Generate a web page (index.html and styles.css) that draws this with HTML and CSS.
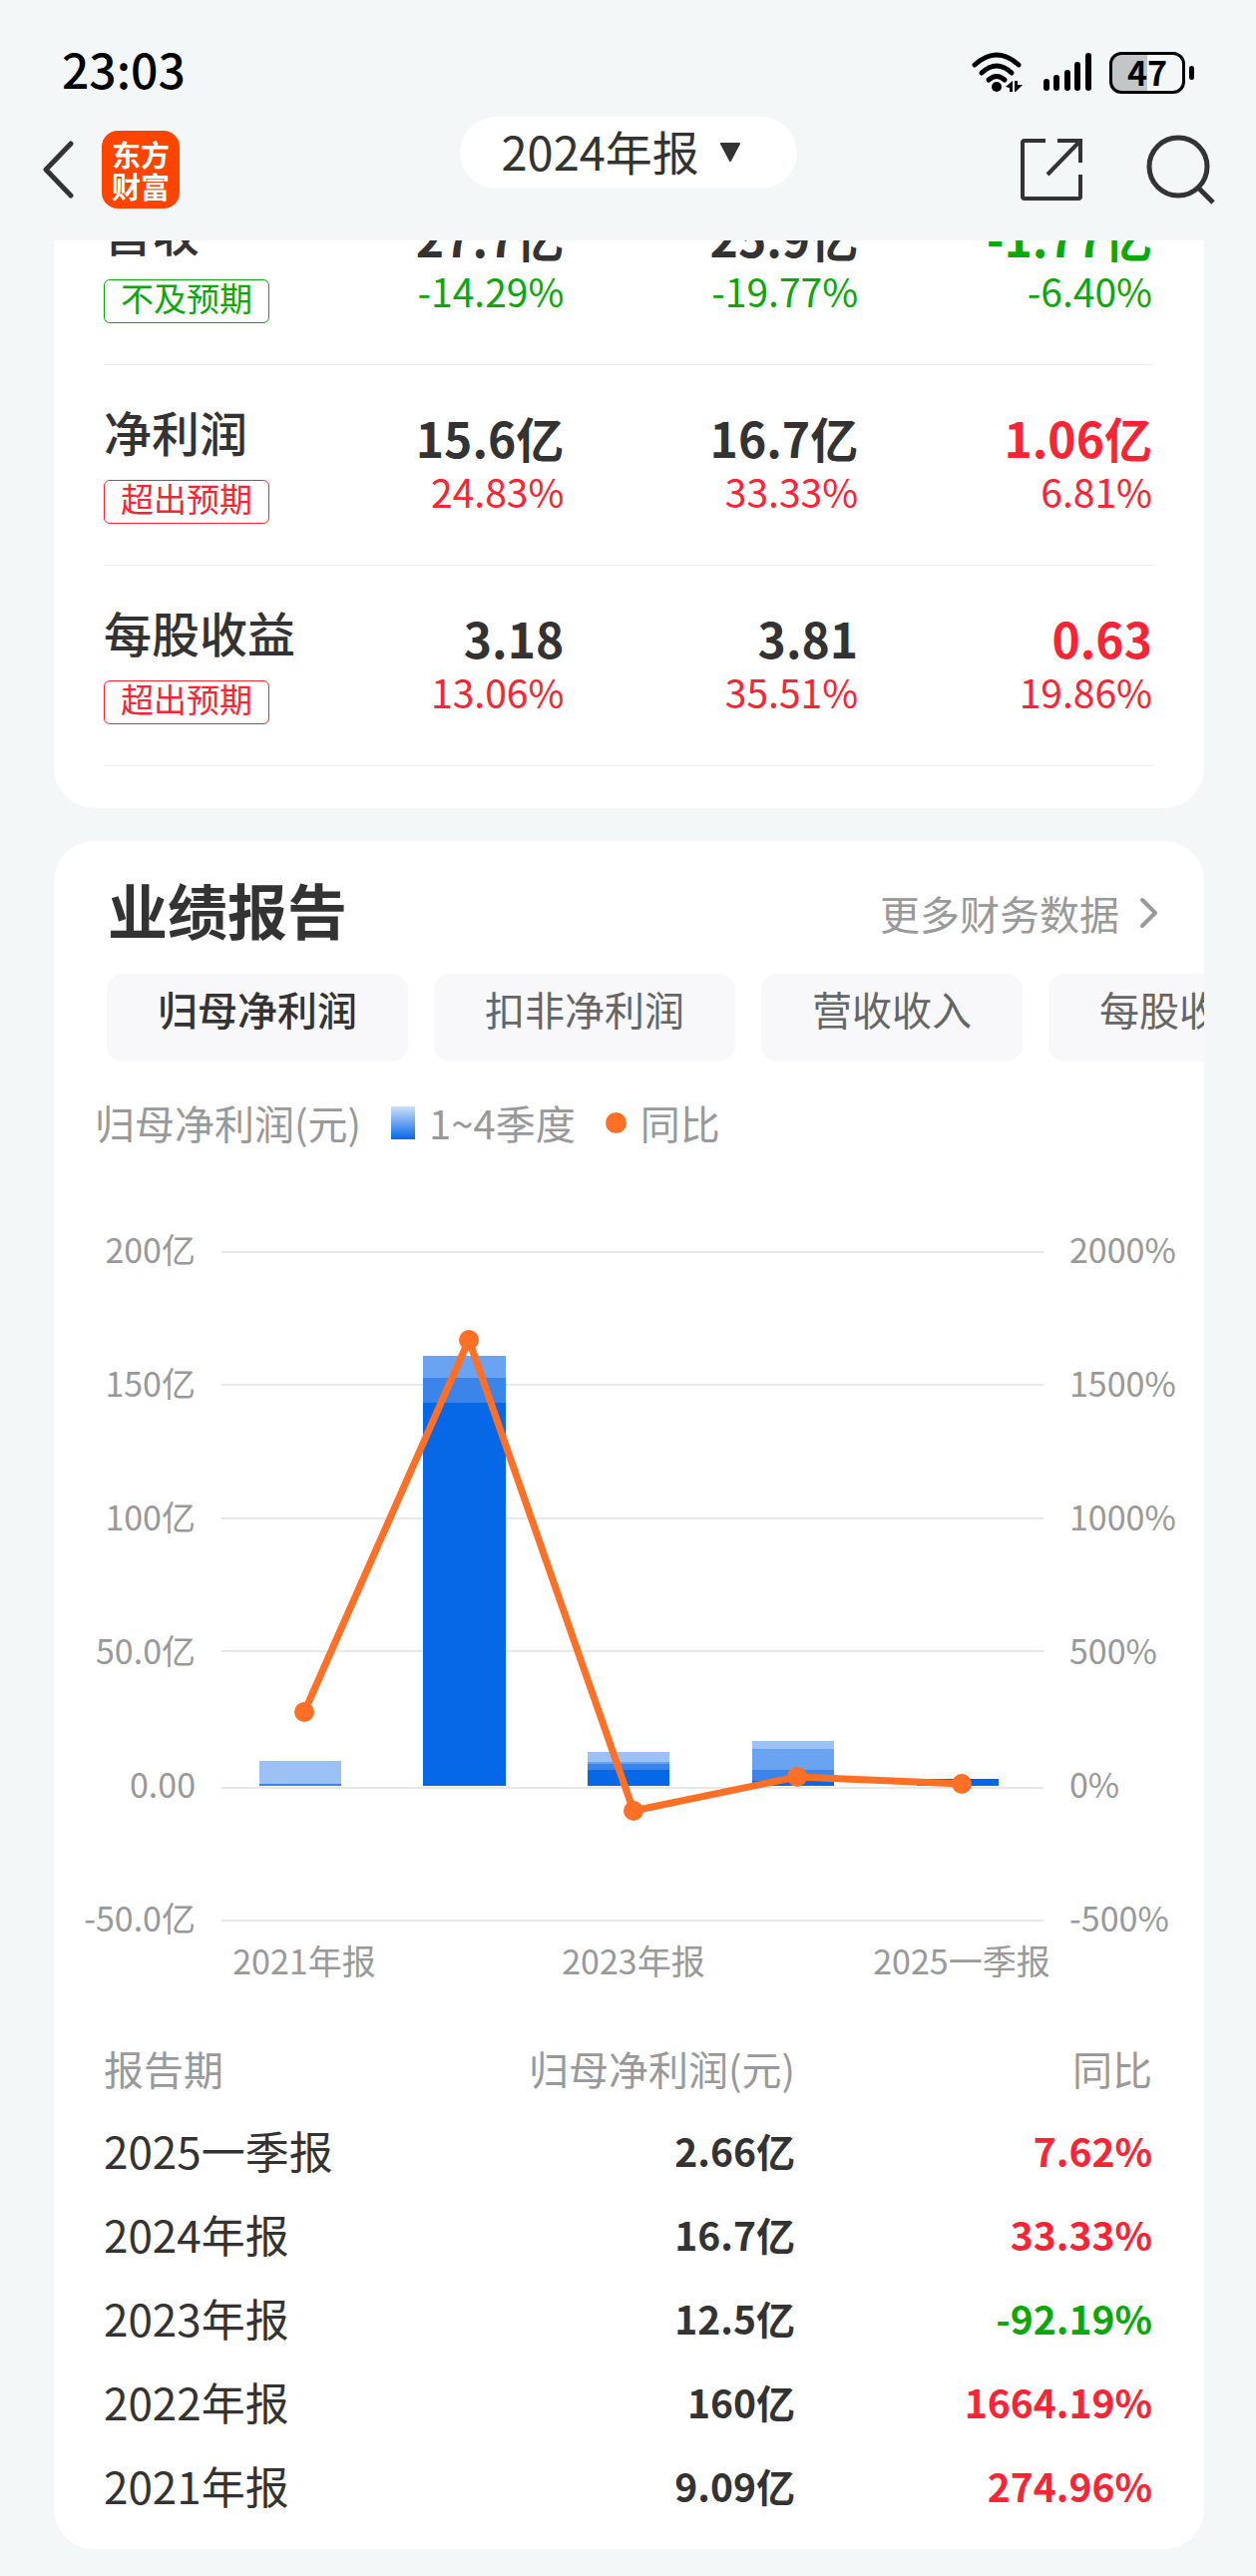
FILE: index.html
```html
<!DOCTYPE html>
<html lang="zh-CN">
<head>
    <meta charset="UTF-8">
    <meta name="viewport" content="width=device-width, initial-scale=1">
    <title>2024年报 - 东方财富</title>
    <link rel="stylesheet" href="styles.css">
</head>
<body>
    <header class="header">
        <div class="status">
            <span class="time">23:03</span>
            <div class="status-icons">
                <svg width="52" height="42" viewBox="0 0 52 42" aria-label="Wi-Fi">
                    <g fill="none" stroke="#000" stroke-width="5" stroke-linecap="round">
                        <path d="M3 13 Q25 -7 47 13"/>
                        <path d="M10 21 Q25 7 40 21"/>
                        <path d="M17 28 Q25 21 33 28"/>
                    </g>
                    <circle cx="25" cy="35" r="5"/>
                    <path d="M34 35 L41 29 V40 H38 V36 Z M43 29 V40 H44 L51 33 H46 V29 Z"/>
                </svg>
                <svg width="50" height="42" viewBox="0 0 50 42" aria-label="信号">
                    <g stroke="#000" stroke-width="6" stroke-linecap="round">
                        <path d="M5 30 V36"/>
                        <path d="M15 26 V36"/>
                        <path d="M26 21 V36"/>
                        <path d="M36 13 V36"/>
                        <path d="M47 4 V36"/>
                    </g>
                </svg>
                <div class="battery"><span>47</span></div>
            </div>
        </div>
        <nav class="nav">
            <div class="nav-left">
                <a href="#" class="back" aria-label="返回">
                    <svg width="34" height="60" viewBox="0 0 34 60"><path d="M31 4 L6 30 L31 56" fill="none" stroke="#333" stroke-width="5" stroke-linecap="round" stroke-linejoin="round"/></svg>
                </a>
                <a href="#" class="logo"><span>东方</span><span>财富</span></a>
            </div>
            <div class="period">
                <select aria-label="报告期">
                    <option>2024年报</option>
                    <option>2023年报</option>
                    <option>2022年报</option>
                </select>
                <svg class="arrow" width="22" height="20" viewBox="0 0 22 20"><path d="M2 1 H20 L11 18 Z" fill="#333" stroke="#333" stroke-width="2" stroke-linejoin="round"/></svg>
            </div>
            <div class="nav-right">
                <a href="#" aria-label="分享">
                    <svg width="64" height="64" viewBox="0 0 64 64" fill="none" stroke="#333" stroke-width="4">
                        <path d="M26 3 H5 Q3 3 3 5 V59 Q3 61 5 61 H59 Q61 61 61 59 V37" />
                        <path d="M38 3 H61 V25"/>
                        <path d="M61 3 L28 37"/>
                    </svg>
                </a>
                <a href="#" aria-label="搜索">
                    <svg width="70" height="70" viewBox="0 0 70 70" fill="none" stroke="#333" stroke-width="5">
                        <circle cx="32" cy="32" r="29"/>
                        <path d="M52 53 L67 68"/>
                    </svg>
                </a>
            </div>
        </nav>
    </header>

    <main>
        <section class="card forecast">
            <table>
                <tr>
                    <th scope="row">营收<span class="tag down">不及预期</span></th>
                    <td><b>27.7亿</b><span class="down">-14.29%</span></td>
                    <td><b>25.9亿</b><span class="down">-19.77%</span></td>
                    <td><b class="down">-1.77亿</b><span class="down">-6.40%</span></td>
                </tr>
                <tr>
                    <th scope="row">净利润<span class="tag up">超出预期</span></th>
                    <td><b>15.6亿</b><span class="up">24.83%</span></td>
                    <td><b>16.7亿</b><span class="up">33.33%</span></td>
                    <td><b class="up">1.06亿</b><span class="up">6.81%</span></td>
                </tr>
                <tr>
                    <th scope="row">每股收益<span class="tag up">超出预期</span></th>
                    <td><b>3.18</b><span class="up">13.06%</span></td>
                    <td><b>3.81</b><span class="up">35.51%</span></td>
                    <td><b class="up">0.63</b><span class="up">19.86%</span></td>
                </tr>
            </table>
        </section>

        <section class="card report">
            <div class="report-head">
                <h2>业绩报告</h2>
                <a href="#" class="more">更多财务数据
                    <svg width="20" height="32" viewBox="0 0 20 32"><path d="M3 3 L16 16 L3 29" fill="none" stroke="#999" stroke-width="4" stroke-linecap="round" stroke-linejoin="round"/></svg>
                </a>
            </div>

            <div class="tabs">
                <button type="button" class="active">归母净利润</button>
                <button type="button">扣非净利润</button>
                <button type="button">营收收入</button>
                <button type="button">每股收益</button>
            </div>

            <div class="legend">
                <span>归母净利润(元)</span>
                <span class="legend-item"><i class="bar-mark"></i>1~4季度</span>
                <span class="legend-item"><i class="dot-mark"></i>同比</span>
            </div>

            <svg class="chart" viewBox="0 0 1153 877" role="img" aria-label="归母净利润与同比">
                <g class="grid">
                    <path d="M168 100 H992"/>
                    <path d="M168 233 H992"/>
                    <path d="M168 367 H992"/>
                    <path d="M168 500 H992"/>
                    <path d="M168 637 H992"/>
                    <path d="M168 770 H992"/>
                </g>
                <g class="axis axis-left">
                    <text x="142" y="111">200亿</text>
                    <text x="142" y="245">150亿</text>
                    <text x="142" y="379">100亿</text>
                    <text x="142" y="513">50.0亿</text>
                    <text x="142" y="647">0.00</text>
                    <text x="142" y="781">-50.0亿</text>
                </g>
                <g class="axis">
                    <text x="1018" y="111">2000%</text>
                    <text x="1018" y="245">1500%</text>
                    <text x="1018" y="379">1000%</text>
                    <text x="1018" y="513">500%</text>
                    <text x="1018" y="647">0%</text>
                    <text x="1018" y="781">-500%</text>
                </g>
                <g class="axis axis-bottom">
                    <text x="251" y="824">2021年报</text>
                    <text x="581" y="824">2023年报</text>
                    <text x="910" y="824">2025一季报</text>
                </g>
                <!-- 2021 -->
                <rect class="q4" x="206" y="610" width="82" height="25"/>
                <rect class="q2" x="206" y="633" width="82" height="2"/>
                <!-- 2022 -->
                <rect class="q3" x="370" y="204" width="83" height="22"/>
                <rect class="q2" x="370" y="226" width="83" height="25"/>
                <rect class="q1" x="370" y="251" width="83" height="384"/>
                <!-- 2023 -->
                <rect class="q4" x="535" y="601" width="82" height="11"/>
                <rect class="q3" x="535" y="611" width="82" height="3"/>
                <rect class="q2" x="535" y="613" width="82" height="6"/>
                <rect class="q1" x="535" y="619" width="82" height="16"/>
                <!-- 2024 -->
                <rect class="q4" x="700" y="590" width="82" height="8"/>
                <rect class="q3" x="700" y="598" width="82" height="21"/>
                <rect class="q2" x="700" y="619" width="82" height="11"/>
                <rect class="q1" x="700" y="630" width="82" height="5"/>
                <!-- 2025 -->
                <rect class="q1" x="865" y="628" width="82" height="7"/>
                <polyline class="line" points="251,561 416,188 581,660 745,626 910,633"/>
                <g class="points">
                    <circle cx="251" cy="561" r="10"/>
                    <circle cx="416" cy="188" r="10"/>
                    <circle cx="581" cy="660" r="10"/>
                    <circle cx="745" cy="626" r="10"/>
                    <circle cx="910" cy="633" r="10"/>
                </g>
            </svg>

            <table class="history">
                <thead>
                    <tr><th>报告期</th><th>归母净利润(元)</th><th>同比</th></tr>
                </thead>
                <tbody>
                    <tr><td>2025一季报</td><td>2.66亿</td><td class="up">7.62%</td></tr>
                    <tr><td>2024年报</td><td>16.7亿</td><td class="up">33.33%</td></tr>
                    <tr><td>2023年报</td><td>12.5亿</td><td class="down">-92.19%</td></tr>
                    <tr><td>2022年报</td><td>160亿</td><td class="up">1664.19%</td></tr>
                    <tr><td>2021年报</td><td>9.09亿</td><td class="up">274.96%</td></tr>
                </tbody>
            </table>
        </section>
    </main>
</body>
</html>
```
FILE: styles.css
```css
* { box-sizing: border-box; }
body { margin: 0; background: #f3f7f8; color: #333; font-family: "Noto Sans CJK SC", sans-serif; font-size: 40px; }
a { color: inherit; text-decoration: none; }
svg { display: block; }
table { width: 100%; border-spacing: 0; table-layout: fixed; }
th, td { padding: 0; }
.up { color: #fc2434; }
.down { color: #0aa80a; }

/* header */
.header { position: sticky; top: 0; z-index: 1; background: #f3f7f8; }
.status { display: flex; justify-content: space-between; padding: 38px 71px 0 62px; }
.time { color: #000; font-size: 48px; line-height: 60px; font-weight: 500; }
.status-icons { display: flex; gap: 18px; padding-top: 14px; }
.battery {
    position: relative;
    width: 76px;
    height: 42px;
    border: 3px solid #000;
    border-radius: 12px;
    background: linear-gradient(90deg, #c3c6c7 50%, transparent 50%);
    color: #000;
    font-size: 34px;
    font-weight: 700;
    line-height: 34px;
    text-align: center;
}
.battery::after { content: ""; position: absolute; right: -12px; top: 11px; width: 5px; height: 14px; border-radius: 3px; background: #000; }
.nav { display: grid; grid-template-columns: 1fr auto 1fr; align-items: center; height: 143px; padding: 0 40px; }
.nav-left { display: flex; align-items: center; gap: 28px; }
.nav-right { display: flex; align-items: center; justify-content: flex-end; gap: 63px; }
.logo {
    display: flex;
    flex-direction: column;
    justify-content: center;
    align-items: center;
    width: 78px;
    height: 78px;
    border-radius: 16px;
    background: #ff4400;
    color: #fff;
    font-size: 29px;
    font-weight: 700;
    line-height: 32px;
}
.period { position: relative; align-self: start; margin-top: 19px; }
.period select {
    display: block;
    appearance: none;
    height: 72px;
    padding: 0 97px 4px 42px;
    border: 0;
    border-radius: 36px;
    background: #fff;
    color: #333;
    font-family: inherit;
    font-size: 47px;
    line-height: 68px;
}
.arrow { position: absolute; right: 56px; top: 26px; pointer-events: none; }

/* cards */
.card { margin: 0 52px 33px 54px; border-radius: 40px; background: #fff; overflow: hidden; }
.forecast { border-radius: 0 0 40px 40px; padding: 0 50px 42px; }
.forecast table { margin-top: -76px; }
.forecast th, .forecast td { height: 201px; border-bottom: 1px solid #eee; vertical-align: top; }
.forecast th { width: 22%; padding-top: 36px; text-align: left; font-size: 48px; font-weight: 500; line-height: 60px; white-space: nowrap; }
.forecast td { padding: 45px 2px 0 0; text-align: right; line-height: 54px; }
.forecast td:nth-child(n+3) { width: 28%; }
.forecast td b { display: block; font-size: 48px; }
.forecast td span { display: block; font-size: 39px; }
.tag {
    display: block;
    width: fit-content;
    height: 44px;
    margin-top: 19px;
    padding: 0 16px;
    border: 1px solid;
    border-radius: 6px;
    font-size: 33px;
    font-weight: 400;
    line-height: 34px;
}

/* report */
.report { margin-bottom: 27px; padding-bottom: 22px; }
.report-head { display: flex; justify-content: space-between; padding: 28px 45px 0 54px; line-height: 80px; }
.report-head h2 { margin: 0; font-size: 60px; font-weight: 700; }
.more { display: flex; align-items: center; gap: 20px; padding-top: 4px; color: #999; }
.tabs { display: flex; gap: 26px; margin-top: 21px; padding-left: 53px; overflow: hidden; }
.tabs button {
    flex: none;
    padding: 0 51px 18px;
    border: 0;
    border-radius: 16px;
    background: #f8f8fa;
    color: #666;
    font-family: inherit;
    font-size: 40px;
    line-height: 70px;
}
.tabs .active { color: #333; font-weight: 500; }
.legend { display: flex; gap: 30px; margin-top: 31px; padding-left: 41px; color: #999; line-height: 60px; }
.legend-item { display: flex; align-items: center; gap: 14px; }
.bar-mark { width: 24px; height: 33px; background: linear-gradient(#cde0fa, #0667e7); }
.dot-mark { width: 21px; height: 21px; border-radius: 50%; background: #ff6f26; }

/* chart */
.chart { width: 100%; }
.grid { stroke: #e8e8e8; stroke-width: 2; }
.axis { fill: #999; font-size: 34px; }
.axis-left { text-anchor: end; }
.axis-bottom { text-anchor: middle; }
.q1 { fill: #0667e7; }
.q2 { fill: #3a84ea; }
.q3 { fill: #6aa3f1; }
.q4 { fill: #9cc1f5; }
.line { fill: none; stroke: #ff6f26; stroke-width: 7; stroke-linejoin: round; }
.points { fill: #ff6f26; }

/* history */
.history { padding: 0 50px; line-height: 60px; }
.history th { height: 81px; color: #999; font-weight: 400; text-align: right; }
.history th:first-child { width: 30%; text-align: left; }
.history th:nth-child(2) { width: 36%; }
.history th, .history td { padding-right: 2px; }
.history td { height: 84px; text-align: right; font-size: 39px; font-weight: 700; }
.history td:first-child { text-align: left; font-size: 44px; font-weight: 400; }
```
